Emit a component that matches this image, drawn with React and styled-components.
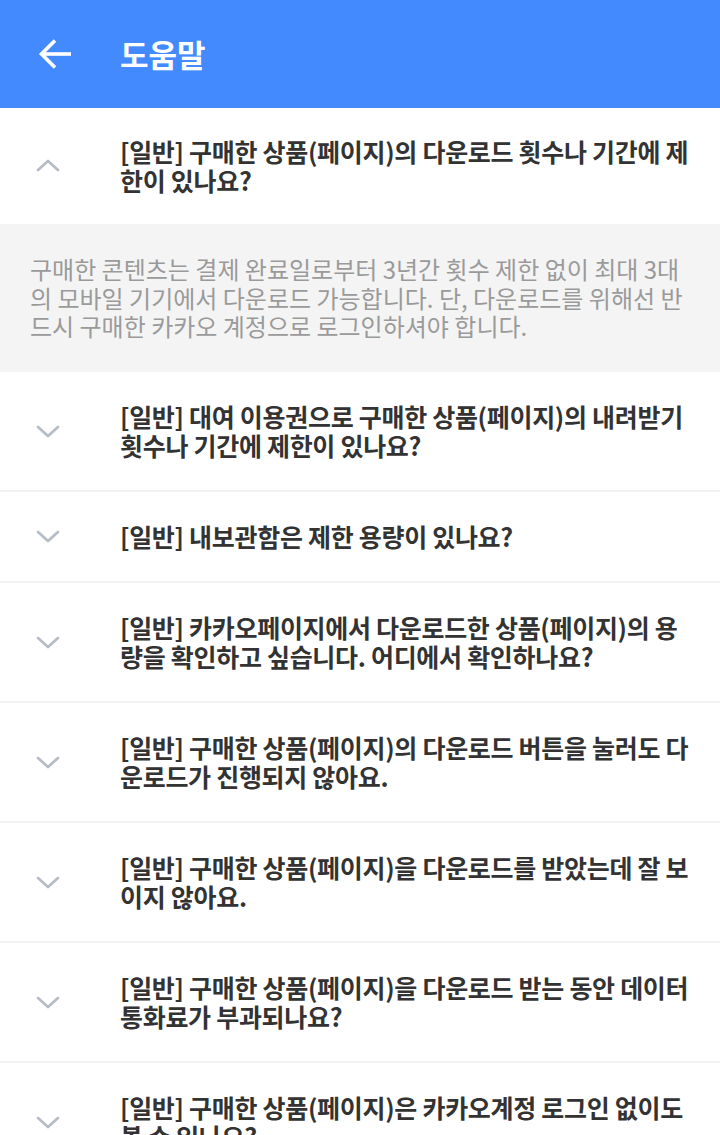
import React from 'react'
import styled, { createGlobalStyle } from 'styled-components'

const Global = createGlobalStyle`
  html, body { margin: 0; padding: 0; background: #fff; }
  body { font-family: "Noto Sans CJK KR", "Noto Sans", sans-serif; }
`

const Page = styled.div`
  width: 720px;
  min-height: 1135px;
  background: #fff;
  overflow: hidden;
`

const Header = styled.header`
  height: 108px;
  background: #448aff;
  display: flex;
  align-items: center;
  color: #fff;
`

const BackButton = styled.button`
  width: 120px;
  height: 108px;
  padding: 0 0 0 38px;
  border: 0;
  background: transparent;
  display: flex;
  align-items: center;
  cursor: pointer;
`

const Title = styled.h1`
  margin: 0;
  font-size: 31px;
  font-weight: 700;
  line-height: 1;
  padding-bottom: 2px;
`

const List = styled.ul`
  margin: 0;
  padding: 0;
  list-style: none;
`

const Item = styled.li`
  border-bottom: ${p => (p.$open ? 'none' : '2px solid #f2f2f2')};
`

const Question = styled.div`
  display: flex;
  align-items: center;
  padding: ${p => (p.$open ? '29px' : '30px')} 24px ${p => (p.$open ? '29px' : '30px')} 0;
`

const Chevron = styled.span`
  width: 120px;
  flex-shrink: 0;
  display: flex;
  padding-left: 35px;
  box-sizing: border-box;
`

const QText = styled.p`
  margin: 0;
  font-size: 25px;
  line-height: 29px;
  font-weight: 700;
  color: #333;
  letter-spacing: -0.3px;
`

const Answer = styled.div`
  background: #f4f4f4;
  padding: 31px 28px 31px 30px;
  font-size: 24px;
  line-height: 28.5px;
  color: #9a9a9a;
  letter-spacing: 0;
`

const faqs = [
  {
    q: '[일반] 구매한 상품(페이지)의 다운로드 횟수나 기간에 제한이 있나요?',
    a: '구매한 콘텐츠는 결제 완료일로부터 3년간 횟수 제한 없이 최대 3대의 모바일 기기에서 다운로드 가능합니다. 단, 다운로드를 위해선 반드시 구매한 카카오 계정으로 로그인하셔야 합니다.',
    open: true,
  },
  { q: '[일반] 대여 이용권으로 구매한 상품(페이지)의 내려받기 횟수나 기간에 제한이 있나요?' },
  { q: '[일반] 내보관함은 제한 용량이 있나요?' },
  { q: '[일반] 카카오페이지에서 다운로드한 상품(페이지)의 용량을 확인하고 싶습니다. 어디에서 확인하나요?' },
  { q: '[일반] 구매한 상품(페이지)의 다운로드 버튼을 눌러도 다운로드가 진행되지 않아요.' },
  { q: '[일반] 구매한 상품(페이지)을 다운로드를 받았는데 잘 보이지 않아요.' },
  { q: '[일반] 구매한 상품(페이지)을 다운로드 받는 동안 데이터 통화료가 부과되나요?' },
  { q: '[일반] 구매한 상품(페이지)은 카카오계정 로그인 없이도 볼 수 있나요?' },
]

const ArrowIcon = () => (
  <svg width="34" height="34" viewBox="0 0 34 34" fill="none" stroke="#fff" strokeWidth="3.6" strokeLinecap="butt">
    <path d="M33 17H4" />
    <path d="M17 3.5L3.5 17 17 30.5" />
  </svg>
)

const ChevronIcon = ({ up }) => (
  <svg width="26" height="16" viewBox="0 0 26 16" fill="none" stroke="#b6bdc6" strokeWidth="2.8" strokeLinecap="round" strokeLinejoin="round">
    {up ? <path d="M3 12l10-9 10 9" /> : <path d="M3 4l10 9 10-9" />}
  </svg>
)

export default function App() {
  return (
    <Page>
      <Global />
      <Header>
        <BackButton aria-label="뒤로">
          <ArrowIcon />
        </BackButton>
        <Title>도움말</Title>
      </Header>
      <List>
        {faqs.map((f, i) => (
          <Item key={i} $open={f.open}>
            <Question $open={f.open}>
              <Chevron>
                <ChevronIcon up={f.open} />
              </Chevron>
              <QText>{f.q}</QText>
            </Question>
            {f.open && <Answer>{f.a}</Answer>}
          </Item>
        ))}
      </List>
    </Page>
  )
}
